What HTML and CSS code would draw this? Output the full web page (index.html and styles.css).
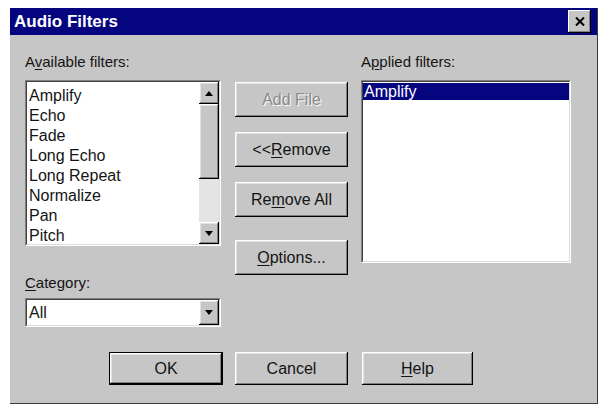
FILE: index.html
```html
<!DOCTYPE html>
<html>
<head>
<meta charset="utf-8">
<link rel="stylesheet" href="styles.css">
</head>
<body>
<div class="window">
  <div class="titlebar">
    <span class="title">Audio Filters</span>
    <span class="close"><svg width="10" height="9" viewBox="0 0 10 9"><path d="M1 0.5 L9 8.5 M9 0.5 L1 8.5" stroke="#000" stroke-width="2"/></svg></span>
  </div>
  <div class="content">
    <div class="main">
      <div class="col left">
        <div class="label">A<u>v</u>ailable filters:</div>
        <div class="listbox avail">
          <div class="inner">
            <ul class="items">
              <li>Amplify</li>
              <li>Echo</li>
              <li>Fade</li>
              <li>Long Echo</li>
              <li>Long Repeat</li>
              <li>Normalize</li>
              <li>Pan</li>
              <li>Pitch</li>
            </ul>
            <div class="scrollbar">
              <div class="raised sbtn"><svg width="8" height="5" viewBox="0 0 8 5"><path d="M4 0 L8 5 L0 5 Z" fill="#000"/></svg></div>
              <div class="raised thumb"></div>
              <div class="track"></div>
              <div class="raised sbtn"><svg width="8" height="5" viewBox="0 0 8 5"><path d="M0 0 L8 0 L4 5 Z" fill="#000"/></svg></div>
            </div>
          </div>
        </div>
        <div class="label cat"><u>C</u>ategory:</div>
        <div class="listbox combo">
          <div class="inner">
            <span class="combo-text">All</span>
            <div class="raised sbtn drop"><svg width="8" height="5" viewBox="0 0 8 5"><path d="M0 0 L8 0 L4 5 Z" fill="#000"/></svg></div>
          </div>
        </div>
      </div>
      <div class="col mid">
        <div class="raised btn disabled">Add File</div>
        <div class="raised btn gap1">&lt;&lt;<u>R</u>emove</div>
        <div class="raised btn gap1">Re<u>m</u>ove All</div>
        <div class="raised btn gap2"><u>O</u>ptions...</div>
      </div>
      <div class="col right">
        <div class="label">A<u>p</u>plied filters:</div>
        <div class="listbox applied">
          <div class="inner">
            <ul class="items sel-list">
              <li class="selected">Amplify</li>
            </ul>
          </div>
        </div>
      </div>
    </div>
    <div class="bottom">
      <div class="raised btn default ok">OK</div>
      <div class="raised btn cancel">Cancel</div>
      <div class="raised btn help"><u>H</u>elp</div>
    </div>
  </div>
</div>
</body>
</html>
```

FILE: styles.css
```css
* { box-sizing: border-box; }
html, body { margin: 0; padding: 0; background: #fff; }
body {
  width: 601px;
  height: 406px;
  overflow: hidden;
  font-family: "Liberation Sans", Arial, sans-serif;
  font-size: 16px;
  color: #141414;
  padding: 8px 0 0 10px;
}
u { text-decoration: underline; text-underline-offset: 2px; }

.window {
  width: 588px;
  height: 396px;
  background: #c6c6c6;
  border-right: 1px solid #3a3a3a;
  border-bottom: 1px solid #3a3a3a;
  display: flex;
  flex-direction: column;
}

.titlebar {
  height: 27px;
  background: #05057f;
  display: flex;
  align-items: flex-start;
  justify-content: space-between;
  padding: 0 6px 0 4px;
}
.title {
  color: #fff;
  font-weight: bold;
  font-size: 17px;
  line-height: 27px;
}
.close {
  margin-top: 2px;
  width: 23px;
  height: 23px;
  background: #c6c6c6;
  display: flex;
  align-items: center;
  justify-content: center;
  box-shadow: inset -1px -1px #000, inset 1px 1px #fff, inset -2px -2px #808080;
}

.content {
  padding: 18px 0 0 15px;
  display: flex;
  flex-direction: column;
}
.main { display: flex; }
.col { display: flex; flex-direction: column; }
.left { width: 196px; }
.mid { width: 113px; margin-left: 14px; padding-top: 29px; }
.right { width: 210px; margin-left: 13px; }

.label { font-size: 15px; line-height: 18px; height: 18px; margin-bottom: 9px; white-space: nowrap; }
.label.cat { margin-top: 28px; margin-bottom: 6px; }

.listbox {
  border: 1px solid;
  border-color: #808080 #fff #fff #808080;
  background: #fff;
}
.listbox .inner {
  border: 1px solid;
  border-color: #404040 #dcdcdc #dcdcdc #404040;
  height: 100%;
  display: flex;
  background: #fff;
  overflow: hidden;
}
.avail { height: 166px; }
.applied { height: 183px; }
.combo { height: 29px; }

.items {
  list-style: none;
  margin: 0;
  padding: 4px 0 0 2px;
  flex: 1;
  line-height: 20px;
  white-space: nowrap;
  overflow: hidden;
}
.sel-list { padding: 1px 0 0 0; line-height: 17px; }
.selected { background: #05057f; color: #fff; padding-left: 1px; }

.raised {
  background: #c6c6c6;
  box-shadow: inset -1px -1px #000, inset 1px 1px #fff, inset -2px -2px #808080, inset 2px 2px #e2e2e2;
}
.scrollbar {
  width: 20px;
  display: flex;
  flex-direction: column;
}
.sbtn {
  height: 22px;
  display: flex;
  align-items: center;
  justify-content: center;
  flex: none;
}
.thumb { height: 75px; flex: none; }
.track { flex: 1; background: #e4e4e4; }

.combo-text { flex: 1; padding-left: 2px; line-height: 25px; }
.drop { width: 20px; height: 25px; }

.btn {
  height: 35px;
  display: flex;
  align-items: center;
  justify-content: center;
  white-space: nowrap;
}
.gap1 { margin-top: 15px; }
.gap2 { margin-top: 23px; }
.disabled { color: #8a8a8a; text-shadow: 1px 1px 0 #fff; }

.bottom {
  display: flex;
  margin-top: 25px;
  padding-left: 84px;
}
.bottom .btn { height: 33px; }
.ok { width: 114px; }
.cancel { width: 113px; margin-left: 12px; }
.help { width: 111px; margin-left: 14px; }
.default {
  border: 1px solid #000;
  box-shadow: inset -1px -1px #000, inset 1px 1px #fff, inset -2px -2px #808080, inset 2px 2px #e2e2e2;
}
```
